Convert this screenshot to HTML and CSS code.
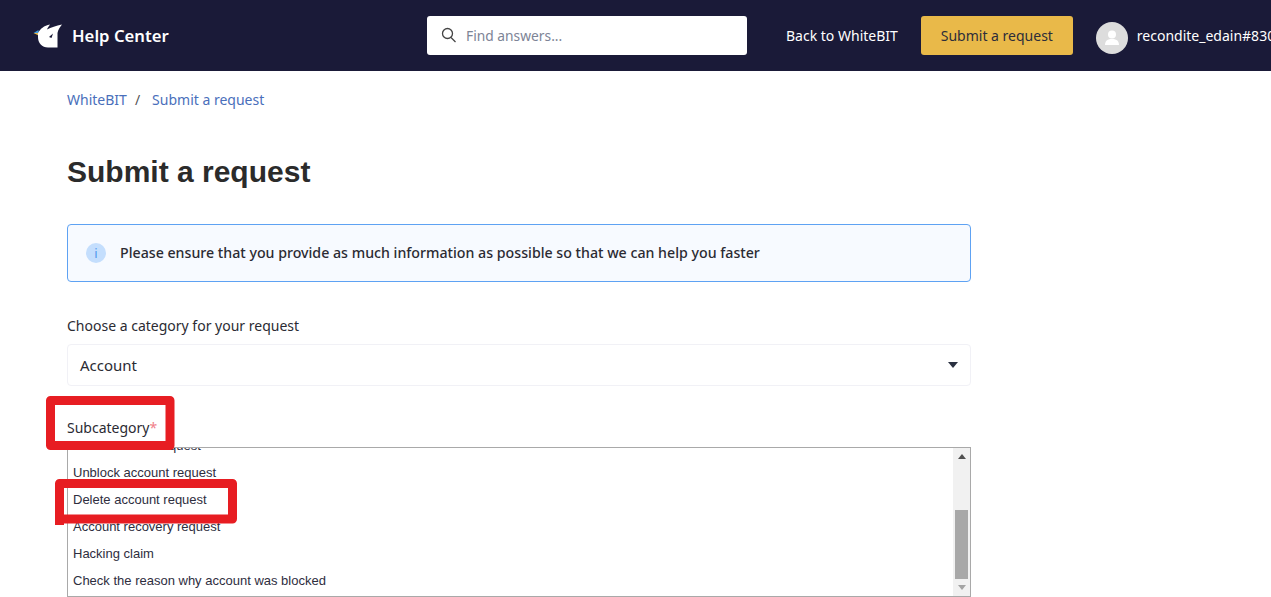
FILE: index.html
```html
<!DOCTYPE html>
<html lang="en">
<head>
<meta charset="utf-8">
<title>Submit a request</title>
<link rel="stylesheet" href="styles.css">
</head>
<body>
<header class="topbar">
  <a class="brand">
    <svg class="logo" width="30" height="27" viewBox="0 0 30 27">
      <path d="M0.500 11 L5.500 8 L5.500 11 Z" fill="#3f9be0"/>
      <path d="M0.500 11 L5.500 11 L5.500 13.500 Z" fill="#e9b949"/>
      <path d="M5 11 C7 7 11 3.500 17 2.500 C16 4 14.500 6 14 7.500 C18 5.500 23 3.500 29 2.500 C27 5 25 8 24.500 11 L24.500 25.500 L15 25.500 C9 25.500 5 21 5 15 Z" fill="#fff"/>
      <path d="M16 15 L20 11.500 L18.500 16 Z" fill="#1a1a38"/>
    </svg>
    <span class="brand-name">Help Center</span>
  </a>
  <div class="search">
    <svg class="search-icon" width="16" height="16" viewBox="0 0 16 16"><circle cx="6.500" cy="6.500" r="5" fill="none" stroke="#444" stroke-width="1.300"/><path d="M10 10.500 L14.500 15" stroke="#444" stroke-width="1.300" fill="none"/></svg>
    <span class="search-text">Find answers...</span>
  </div>
  <a class="back-link">Back to WhiteBIT</a>
  <a class="submit-btn">Submit a request</a>
  <div class="user">
    <svg class="avatar" width="32" height="32" viewBox="0 0 32 32"><circle cx="16" cy="16" r="16" fill="#ddd"/><circle cx="16" cy="12.500" r="4" fill="#fff"/><path d="M9 23 C9 18.500 12 17 16 17 C20 17 23 18.500 23 23 Z" fill="#fff"/></svg>
    <span class="user-name">recondite_edain#8302</span>
  </div>
</header>
<main class="content">
  <nav class="crumbs"><a>WhiteBIT</a><span class="sep">/</span><a>Submit a request</a></nav>
  <h1 class="title">Submit a request</h1>
  <div class="notice">
    <span class="info-icon">i</span>
    <span class="notice-text">Please ensure that you provide as much information as possible so that we can help you faster</span>
  </div>
  <label class="field-label first">Choose a category for your request</label>
  <div class="dropdown"><span>Account</span><i class="caret"></i></div>
  <label class="field-label second">Subcategory<span class="req">*</span></label>
  <div class="listbox">
    <div class="options">
      <div class="option">Block account request</div>
      <div class="option">Unblock account request</div>
      <div class="option">Delete account request</div>
      <div class="option">Account recovery request</div>
      <div class="option">Hacking claim</div>
      <div class="option">Check the reason why account was blocked</div>
    </div>
    <div class="scrollbar">
      <i class="arrow up"></i>
      <div class="track"><div class="thumb"></div></div>
      <i class="arrow down"></i>
    </div>
  </div>
</main>
<svg class="marks" width="1271" height="597" viewBox="0 0 1271 597">
  <path d="M50.500 400.500 H170 V445.500 H50.500 Z" fill="none" stroke="#e71d22" stroke-width="9" stroke-linejoin="round"/>
  <path d="M59.500 525 V483.500 H232.500 V519 H60" fill="none" stroke="#e71d22" stroke-width="9" stroke-linejoin="round"/>
</svg>
</body>
</html>
```
FILE: styles.css
```css
* { box-sizing: border-box; }
html, body { margin: 0; height: 597px; overflow: hidden; background: #fff; }
body { font-family: "Noto Sans", sans-serif; color: #2b2b2b; position: relative; }
.topbar { height: 71px; background: #1a1a38; display: flex; align-items: center; white-space: nowrap; overflow: hidden; }
.topbar > * { flex-shrink: 0; }
.brand { display: flex; align-items: center; margin-left: 33px; width: 394px; }
.logo { margin-right: 9px; }
.brand-name { color: #fff; font-size: 16.700px; font-weight: 600; }
.search { width: 320px; height: 39px; background: #fff; border-radius: 3px; display: flex; align-items: center; padding-left: 14px; margin-top: -1px; }
.search-icon { margin-right: 9px; }
.search-text { font-size: 13.800px; color: #7d8496; }
.back-link { color: #fff; font-size: 14px; margin-left: 39px; }
.submit-btn { width: 152px; height: 39px; margin-left: 23px; margin-top: -1px; background: #e9b949; border-radius: 3px; font-size: 14px; color: #2d2d3a; display: flex; align-items: center; justify-content: center; }
.user { display: flex; align-items: center; margin-left: 23px; margin-top: 4px; }
.avatar { margin-right: 9px; }
.user-name { color: #fff; font-size: 14px; margin-top: -4px; }
.content { padding-left: 67px; width: 971px; }
.crumbs { font-size: 14px; color: #4a6fbb; padding-top: 19px; line-height: 20px; display: flex; }
.sep { color: #555; margin: 0 12px 0 8px; }
.title { font-family: "Liberation Sans", Arial, sans-serif; font-size: 30px; font-weight: 700; line-height: 36px; margin: 44px 0 0; color: #2b2b2b; }
.notice { margin-top: 34px; height: 58px; border: 1px solid #5ea2f3; border-radius: 4px; background: #f7faff; display: flex; align-items: center; padding: 0 0 2px 18px; }
.info-icon { width: 20px; height: 20px; border-radius: 50%; background: #c4defd; color: #4f97ee; font-size: 13px; display: flex; align-items: center; justify-content: center; margin: 2px 14px 0 0; }
.notice-text { font-size: 14.200px; font-weight: 500; color: #2b2b33; }
.field-label { display: block; font-size: 14px; line-height: 20px; color: #2b2b33; }
.first { margin-top: 34px; }
.second { margin-top: 32px; }
.req { color: #f0808a; }
.dropdown { margin-top: 8px; height: 42px; border: 1px solid #f1f1f6; border-radius: 4px; display: flex; align-items: center; justify-content: space-between; padding: 0 12px; font-size: 15px; color: #2b2b33; }
.caret { width: 0; height: 0; border-left: 5px solid transparent; border-right: 5px solid transparent; border-top: 6px solid #2a3040; }
.listbox { margin-top: 9px; height: 150px; border: 1px solid #a9a9a9; display: flex; overflow: hidden; }
.options { flex: 1; margin-top: -16px; padding-left: 5px; font-family: "Liberation Sans", Arial, sans-serif; font-size: 13px; color: #2e2e3e; }
.option { height: 27px; line-height: 27px; }
.scrollbar { width: 17px; background: #f1f1f1; display: flex; flex-direction: column; align-items: center; }
.arrow { width: 0; height: 0; border-left: 4px solid transparent; border-right: 4px solid transparent; }
.up { margin-top: 6px; border-bottom: 5px solid #505050; }
.down { margin-bottom: 6px; border-top: 5px solid #a3a3a3; }
.track { flex: 1; display: flex; flex-direction: column; justify-content: flex-end; width: 100%; padding: 0 2px 0 2px; }
.thumb { height: 69px; background: #a8a8a8; margin-bottom: 6px; }
.marks { position: absolute; left: 0; top: 0; pointer-events: none; }
```
